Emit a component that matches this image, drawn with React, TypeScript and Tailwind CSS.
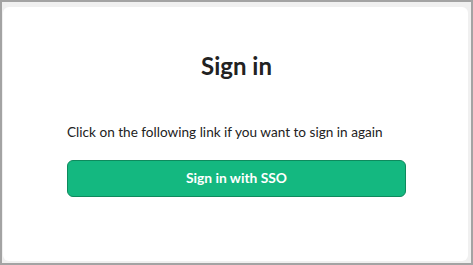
export default function App() {
  return (
    <div
      className="w-[473px] h-[265px] border-2 border-[#a3a3a3] bg-[#f0f0f0] pt-[5px] pl-px pr-[3px] pb-[2px]"
      style={{ fontFamily: "Lato, 'Noto Sans', sans-serif" }}
    >
      <div className="h-full bg-white rounded-[6px] flex flex-col pl-[64px] pr-[62px] pt-[44px]">
        <h1 className="text-center text-[24px] font-bold text-[#222] leading-[30px]">Sign in</h1>
        <p className="mt-[42px] text-[13.6px] text-[#222] leading-[18px]">
          Click on the following link if you want to sign in again
        </p>
        <button className="mt-[19px] h-[37px] w-full rounded-[6px] bg-[#14b880] border border-[#0e8a5d] text-white text-[13.8px] font-bold">
          Sign in with SSO
        </button>
      </div>
    </div>
  );
}
